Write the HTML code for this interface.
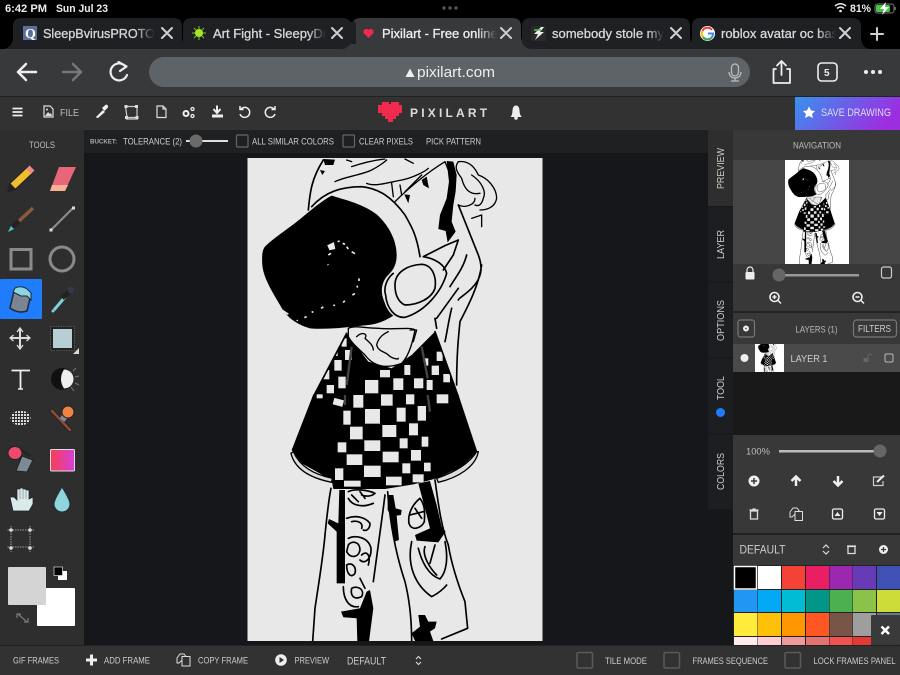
<!DOCTYPE html>
<html><head><meta charset="utf-8"><title>Pixilart</title>
<style>
html,body{margin:0;padding:0;background:#000;width:900px;height:675px;overflow:hidden}
svg{display:block;position:absolute;left:0;top:0}
text{font-family:"Liberation Sans",sans-serif;fill:#ccc;font-size:9.5px}
.tab{font-size:13px;fill:#d8d8d8;stroke:#d8d8d8;stroke-width:.3px}
.x{stroke:#d0d0d0;stroke-width:2;fill:none;stroke-linecap:round}
.l{fill:none;stroke:#000;stroke-width:5;stroke-linecap:round;stroke-linejoin:round}
.t{fill:none;stroke:#000;stroke-width:5;stroke-linecap:round;stroke-linejoin:round}
</style></head><body>
<svg width="900" height="675" viewBox="0 0 900 675" xmlns="http://www.w3.org/2000/svg">
<defs>
<linearGradient id="save" x1="0" x2="1" y1="0" y2=".3"><stop offset="0" stop-color="#3793ee"/><stop offset="1" stop-color="#9b2fe0"/></linearGradient>
<linearGradient id="grad" x1="0" x2="1"><stop offset="0" stop-color="#f53f55"/><stop offset="1" stop-color="#d93fd8"/></linearGradient>
<linearGradient id="fd" x1="0" x2="1"><stop offset="0" stop-color="#1f2023" stop-opacity="0"/><stop offset="1" stop-color="#1f2023"/></linearGradient>
<linearGradient id="fa" x1="0" x2="1"><stop offset="0" stop-color="#38393b" stop-opacity="0"/><stop offset="1" stop-color="#38393b"/></linearGradient>
<pattern id="dots" width="3" height="3" patternUnits="userSpaceOnUse"><rect width="2" height="2" fill="#ddd"/></pattern>
<clipPath id="cv"><rect x="247.5" y="158" width="295" height="483"/></clipPath>
<g id="art">
 <g transform="translate(245,155) scale(.3333)">
  <!-- shirt -->
  <path d="M305 535 L205 725 L640 725 L570 530 L500 600 L440 640 L370 620 Z" fill="#000"/>
  <g fill="#e8e8e8">
   <rect x="290" y="550" width="15" height="25"/><rect x="258" y="575" width="20" height="28"/><rect x="300" y="585" width="20" height="30"/><rect x="268" y="615" width="22" height="32"/><rect x="235" y="645" width="18" height="28"/><rect x="280" y="665" width="22" height="35"/><rect x="245" y="690" width="22" height="25"/><rect x="360" y="675" width="40" height="40"/><rect x="405" y="645" width="30" height="22"/><rect x="478" y="630" width="18" height="30"/><rect x="445" y="670" width="30" height="35"/><rect x="507" y="670" width="28" height="30"/><rect x="575" y="590" width="18" height="28"/><rect x="560" y="632" width="22" height="28"/><rect x="595" y="657" width="20" height="25"/><rect x="545" y="675" width="18" height="30"/><rect x="540" y="610" width="10" height="22"/><rect x="325" y="720" width="30" height="10"/>
  </g>
  <path d="M320 575 L305 690 M530 575 L548 670" stroke="#444" stroke-width="7" fill="none"/>
  <path d="M305 535 L205 725 M570 530 L640 725" class="l"/>
  <!-- collar -->
  <path d="M310 520 C330 510 360 520 400 520 C450 525 500 515 510 525 C505 550 495 600 470 625 C430 640 390 640 360 600 C340 580 320 565 310 545 Z" fill="#e8e8e8" stroke="#000" stroke-width="4"/>
  <path class="t" style="stroke-width:4" d="M335 545 C350 530 370 535 360 550 C370 560 385 570 385 585 M395 570 C400 545 420 535 430 530 M395 570 C400 590 420 590 430 600 C440 610 460 615 460 610 M495 525 L515 525 L505 560"/>
  <!-- hood / hair -->
  <path class="l" d="M190 165 C195 110 200 70 235 15 M200 155 C240 110 290 95 350 95 C400 100 440 125 480 180 C500 215 515 240 525 305"/>
  <path class="t" style="stroke-width:4" d="M270 80 C300 65 350 60 380 45 C400 35 420 20 425 15 M320 35 C350 25 390 15 420 12 M365 85 C390 95 420 85 470 75 C500 70 540 50 550 40 M440 85 L445 125 M465 90 L470 120 M480 110 C500 90 520 70 530 60 M450 140 C490 100 550 50 600 20 L620 70 M305 15 L320 20 M480 12 L505 25"/>
  <path d="M235 12 L270 14 L265 30 L240 30 Z M225 45 L240 48 L232 60 Z M478 118 L495 120 L490 145 Z M530 75 L545 65 L552 100 L535 90 Z" fill="#000"/>
  <path d="M605 18 L625 20 L635 60 L632 110 L625 150 L620 200 L632 230 L608 262 L602 228 L580 222 L585 180 L605 130 L612 80 Z" fill="#000"/>
  <path class="t" style="stroke-width:4" d="M640 20 C680 15 695 50 700 60 C730 70 755 100 755 130 C750 160 720 165 705 165 M650 70 C660 110 680 120 705 115 M680 60 C710 80 725 110 715 130 C710 150 700 155 690 150 M640 150 C660 160 690 150 690 130 M680 190 L710 180 L710 215 M640 20 C625 40 640 55 650 70"/>
  <path class="l" d="M640 150 C660 200 680 250 700 300 C715 340 710 370 680 400 C660 420 640 430 640 435 M665 300 C655 340 630 370 615 395 M620 460 C610 500 605 540 600 560 M710 330 C700 400 660 470 645 500 C640 550 635 600 635 690"/>
  <!-- face -->
  <path d="M260 122 C300 135 350 145 395 178 C430 210 455 255 455 300 C455 335 440 350 425 365 C410 385 405 410 418 440 C425 462 435 475 445 482 C425 495 400 507 370 510 C320 515 250 525 195 520 C160 510 125 490 105 450 C85 415 55 370 52 330 C50 300 52 285 60 275 C90 245 140 215 180 180 C205 160 235 135 260 122 Z" fill="#000"/>
  <path d="M250 272 L265 265 L268 280 L255 283 Z M278 260 L284 258 M293 265 L300 268 M305 275 L310 282 M320 290 L330 296 M250 300 L258 295 M248 328 L250 330 M342 370 L342 378 M337 392 L337 398 M330 416 L322 420 M300 438 L294 442 M265 450 L270 452 M235 456 L228 460 M205 470 L200 472 M185 485 L178 488 M156 495 L158 498 M112 466 L130 478" stroke="#e8e8e8" stroke-width="5" fill="#e8e8e8"/>
  <!-- ear -->
  <path class="l" d="M450 390 C450 350 490 330 530 328 C565 330 575 370 570 400 C560 430 520 450 480 450 C455 440 450 410 450 390 Z"/>
  <path class="l" d="M535 305 C570 310 600 330 605 355 C590 410 540 470 480 487 C450 490 425 460 422 420 C415 400 425 370 445 355 M535 305 L600 272 L640 255 L625 300 L595 345 M575 490 L640 400 M570 490 L575 520"/>
 </g>
 <g transform="translate(245,395) scale(.3333)">
  <!-- skirt -->
  <path d="M205 -2 L140 165 L170 205 L260 255 L265 282 L420 282 L505 268 L575 250 L650 215 L697 170 L640 -2 Z" fill="#000"/>
  <path d="M138 175 C150 225 200 250 260 262 L262 250 C205 238 165 215 145 170 Z M580 262 C640 248 692 215 700 170 L695 170 C670 210 620 235 575 250 Z" fill="#ddd" stroke="#000" stroke-width="4"/>
  <g fill="#e8e8e8">
   <rect x="215" y="-2" width="18" height="12"/><rect x="265" y="12" width="30" height="20" transform="rotate(15 280 22)"/><rect x="325" y="0" width="30" height="38"/><rect x="408" y="-2" width="35" height="34"/><rect x="483" y="-2" width="25" height="30"/><rect x="575" y="-2" width="35" height="27"/>
   <rect x="295" y="47" width="22" height="42"/><rect x="360" y="42" width="45" height="44"/><rect x="455" y="38" width="27" height="42"/><rect x="518" y="33" width="25" height="44"/>
   <rect x="315" y="95" width="38" height="38"/><rect x="412" y="90" width="42" height="36"/><rect x="492" y="85" width="27" height="36"/>
   <rect x="278" y="142" width="26" height="30"/><rect x="358" y="136" width="48" height="32"/><rect x="464" y="130" width="24" height="30"/><rect x="530" y="125" width="20" height="30"/>
   <rect x="305" y="178" width="47" height="32"/><rect x="413" y="170" width="48" height="32"/><rect x="498" y="165" width="30" height="32"/>
   <rect x="270" y="220" width="25" height="35"/><rect x="357" y="212" width="50" height="34"/><rect x="472" y="205" width="24" height="30"/><rect x="537" y="203" width="20" height="26"/>
   <rect x="297" y="257" width="50" height="18"/><rect x="423" y="245" width="47" height="26"/><rect x="503" y="238" width="33" height="24"/>
  </g>
  <path d="M300 0 L300 30 M548 0 L555 50" stroke="#444" stroke-width="7"/>
  <!-- pants -->
  <path class="l" d="M258 280 C250 320 245 370 240 420 C235 480 225 540 210 640 L203 740 M420 300 C410 380 400 450 385 560 M428 290 C435 380 450 470 480 560 C495 620 500 680 500 740 M570 255 C580 330 590 400 610 450 C620 510 640 570 660 620 L668 700 L590 732"/>
  <path d="M283 285 L300 285 L300 565 L275 565 L275 410 L248 385 L252 372 L280 385 Z" fill="#000"/>
  <path d="M375 585 L385 640 L372 740 L337 740 L335 670 L295 667 L288 650 L345 640 L365 590 Z" fill="#000"/>
  <path d="M520 265 L555 258 L575 330 L590 395 L602 410 L580 442 L515 437 L510 420 L555 400 L540 340 Z" fill="#000"/>
  <path d="M428 300 L445 300 L452 340 L470 345 L468 360 L455 362 L462 435 L448 440 L437 360 L428 345 Z" fill="#000"/>
  <path d="M520 660 L540 660 L550 680 L575 680 L570 700 L555 710 L565 738 L510 738 L500 715 L525 695 Z" fill="#000"/>
  <path class="t" d="M310 290 C330 280 370 285 390 295 C380 305 360 305 350 300 M310 310 C320 330 350 340 385 325 M320 300 L340 320 M345 290 L360 310 M305 370 C330 360 360 365 375 385 C375 400 365 410 355 405 M320 380 C340 375 355 385 350 400 M310 430 C330 420 370 425 378 460 C380 490 360 510 345 495 M310 450 C320 435 345 440 345 465 C340 490 315 490 305 470 Z M305 510 C320 500 335 515 330 535 C320 550 305 540 305 510 Z M320 580 C340 570 360 585 350 605 C330 615 315 605 320 580 Z M295 575 C295 610 310 640 340 635 M345 550 L360 580 M350 480 C365 465 378 480 370 510"/>
  <path class="t" d="M525 310 C500 330 488 360 492 385 C500 410 530 400 538 380 C540 350 540 330 525 310 Z M510 340 L530 370 M495 360 L535 350 M500 440 C485 510 510 570 560 605 C590 590 605 570 605 570 M520 460 C530 500 550 540 585 552 C605 530 610 490 600 440 M540 455 C530 480 555 520 575 540 M570 450 L555 505"/>
 </g>
</g>
<clipPath id="tc"><rect x="785" y="160" width="64" height="104"/></clipPath>
<clipPath id="lc"><rect x="755" y="344" width="29" height="28"/></clipPath>
</defs>

<!-- status bar -->
<rect width="900" height="49" fill="#000"/>
<text x="5" y="12" style="font-size:11px;font-weight:bold;fill:#eee" textLength="42" lengthAdjust="spacingAndGlyphs">6:42 PM</text>
<text x="56" y="12" style="font-size:11px;font-weight:bold;fill:#eee" textLength="52" lengthAdjust="spacingAndGlyphs">Sun Jul 23</text>
<circle cx="444" cy="8" r="1.7" fill="#555"/><circle cx="450" cy="8" r="1.7" fill="#555"/><circle cx="456" cy="8" r="1.7" fill="#555"/>
<path d="M835 6 Q840.5 1.5 846 6 M837 8.5 Q840.5 5.500 844 8.5" fill="none" stroke="#eee" stroke-width="1.5"/><circle cx="840.5" cy="11" r="1.3" fill="#eee"/>
<text x="850" y="12" style="font-size:11px;font-weight:bold;fill:#eee" textLength="21" lengthAdjust="spacingAndGlyphs">81%</text>
<rect x="875" y="4" width="19" height="9" rx="2.5" fill="none" stroke="#777"/><rect x="876" y="5" width="14" height="7" rx="1.5" fill="#4bc24b"/><rect x="894.6" y="7" width="1.2" height="3" fill="#777"/>
<path d="M886 2 L880 9 L884 9 L882 15 L889 7 L885 7 Z" fill="#fff"/>

<!-- tabs -->
<path d="M4 49 Q13 47 13 36 V26 Q13 18 22 18 H173 Q182 18 182 26 V49 Z" fill="#1f2023"/>
<path d="M175 49 Q183 47 183 36 V26 Q183 18 192 18 H342 Q351 18 351 26 V49 Z" fill="#1f2023"/>
<path d="M513 49 Q522 47 522 36 V26 Q522 18 531 18 H681 Q690 18 690 26 V36 Q690 47 698 49 Z" fill="#1f2023"/>
<path d="M684 49 Q692 47 692 36 V26 Q692 18 701 18 H852 Q861 18 861 26 V36 Q861 47 869 49 Z" fill="#1f2023"/>
<path d="M343 49 Q352 47 352 36 V26 Q352 18 361 18 H512 Q521 18 521 26 V36 Q521 47 530 49 Z" fill="#38393b"/>
<rect x="23" y="26" width="14" height="14" fill="#5b7099"/><text x="25" y="38" style="font-family:'Liberation Serif',serif;font-size:14px;font-weight:bold;fill:#fff">Q</text>
<g stroke="#7fc31c" stroke-width="1"><path d="M199 26 V40 M192 33 H206 M194 28 L204 38 M204 28 L194 38"/></g><circle cx="199" cy="33" r="4" fill="#a5e626"/>
<path d="M368.500 38 L363.500 33 V30.500 L365.500 29 H367.500 L368.500 30 L369.500 29 H371.500 L373.500 30.500 V33 Z" fill="#f0294f"/>
<rect x="531" y="26" width="15" height="15" fill="#2a2a2a"/><path d="M541 27 L534 34 H538 L535 40 L544 32 H540 L544 27 Z" fill="#eee"/><path d="M534 30 H541" stroke="#55c455" stroke-width="1.5"/>
<circle cx="707.500" cy="33.500" r="7.500" fill="#fff"/><path d="M712 30 A5.500 5.500 0 0 0 702.500 31" stroke="#ea4335" stroke-width="2" fill="none"/><path d="M702.500 31 A5.500 5.500 0 0 0 703 37" stroke="#fbbc05" stroke-width="2" fill="none"/><path d="M703 37 A5.500 5.500 0 0 0 712 37" stroke="#34a853" stroke-width="2" fill="none"/><path d="M708 33.500 H713 A5.500 5.500 0 0 1 712 37" stroke="#4285f4" stroke-width="2" fill="none"/>
<text class="tab" x="43" y="38" textLength="112" lengthAdjust="spacingAndGlyphs">SleepBvirusPROTO</text><rect x="135" y="22" width="20" height="22" fill="url(#fd)"/><rect x="155" y="22" width="5" height="22" fill="#1f2023"/>
<text class="tab" x="213" y="38">Art Fight - SleepyDr</text><rect x="308" y="22" width="18" height="22" fill="url(#fd)"/><rect x="326" y="22" width="30" height="22" fill="#1f2023"/>
<text class="tab" x="382" y="38" style="fill:#eee;stroke:#eee">Pixilart - Free online</text><rect x="478" y="22" width="19" height="22" fill="url(#fa)"/><rect x="497" y="22" width="20" height="22" fill="#38393b"/>
<text class="tab" x="552" y="38">somebody stole my</text><rect x="647" y="22" width="17" height="22" fill="url(#fd)"/><rect x="664" y="22" width="20" height="22" fill="#1f2023"/>
<text class="tab" x="721" y="38">roblox avatar oc bas</text><rect x="817" y="22" width="19" height="22" fill="url(#fd)"/><rect x="836" y="22" width="20" height="22" fill="#1f2023"/>
<path class="x" d="M162 28 L172 38 M172 28 L162 38 M332 28 L342 38 M342 28 L332 38 M501 28 L511 38 M511 28 L501 38 M671 28 L681 38 M681 28 L671 38 M840 28 L850 38 M850 28 L840 38 M871 34 H883 M877 28 V40" />

<!-- nav bar -->
<rect y="49" width="900" height="47" fill="#38393b"/>
<rect x="149" y="57" width="601" height="30" rx="15" fill="#5e6367"/>
<path d="M36 72 H18 M26 64 L18 72 L26 80" stroke="#eee" stroke-width="2.500" fill="none" stroke-linecap="round" stroke-linejoin="round"/>
<path d="M63 72 H81 M73 64 L81 72 L73 80" stroke="#777" stroke-width="2.500" fill="none" stroke-linecap="round" stroke-linejoin="round"/>
<path d="M126 67 A8.500 8.500 0 1 0 127 75 M118.500 62 L126.500 66.500 L120 71" stroke="#eee" stroke-width="2.200" fill="none" stroke-linecap="round" stroke-linejoin="round"/>
<path d="M410 68.500 L414.500 77 H405.500 Z" fill="#eee"/>
<text x="417" y="77" style="font-size:15px;fill:#eee" textLength="78" lengthAdjust="spacingAndGlyphs">pixilart.com</text>
<rect x="731.500" y="64" width="7" height="12" rx="3.500" fill="none" stroke="#bbb" stroke-width="1.300"/><path d="M729 72 A6 6 0 0 0 741 72 M735 78 V81 M731 81 H739" fill="none" stroke="#bbb" stroke-width="1.300"/>
<path d="M776 69 H773.500 V83 H790 V69 H787 M781.500 75 V61.500 M777 65.500 L781.500 61 L786 65.500" fill="none" stroke="#eee" stroke-width="1.800" stroke-linecap="round" stroke-linejoin="round"/>
<rect x="818" y="63" width="19" height="18" rx="3.500" fill="none" stroke="#eee" stroke-width="1.600"/><text x="824" y="76" style="font-size:10px;font-weight:bold;fill:#eee">5</text>
<circle cx="866" cy="72" r="2" fill="#eee"/><circle cx="873" cy="72" r="2" fill="#eee"/><circle cx="880" cy="72" r="2" fill="#eee"/>

<!-- app bar -->
<rect y="96" width="900" height="1.500" fill="#222"/>
<rect y="97" width="900" height="33" fill="#323232"/>
<rect x="795" y="97" width="105" height="33" fill="url(#save)"/>
<path d="M12.500 108.500 H22.500 M12.500 112 H22.500 M12.500 115.500 H22.500" stroke="#eee" stroke-width="1.700"/>
<path d="M44 106 H50 L53 109 V117 H44 Z" fill="none" stroke="#ddd" stroke-width="1.200"/><path d="M45 116 L48 112 L50 114 L51 113 L52 116 Z" fill="#ddd"/><circle cx="47" cy="109.500" r="1" fill="#ddd"/>
<text x="60" y="116" style="font-size:10.500px;fill:#bbb" textLength="19" lengthAdjust="spacingAndGlyphs">FILE</text>
<path d="M97 118 L96 117 L103 110 L105 112 L98 118 Z" fill="#eee"/><path d="M102 108 L106 104.500 Q108.500 105 108 107.500 L104.500 111 Z" fill="#eee"/>
<path d="M125.500 106.500 H137 V117.500 H127 Z M126 119 H138" fill="none" stroke="#ccc" stroke-width="1.200"/><rect x="124.500" y="105" width="3" height="3" fill="#ddd"/><rect x="135" y="105" width="3" height="3" fill="#ddd"/><rect x="125" y="116" width="3" height="3" fill="#ddd"/><rect x="135.500" y="116" width="3" height="3" fill="#ddd"/>
<path d="M157 106 H163 L166 109 V117.500 H157 Z M163 106 V109 H166" fill="none" stroke="#ddd" stroke-width="1.200"/>
<circle cx="186" cy="113.500" r="2.500" fill="none" stroke="#eee" stroke-width="2"/><circle cx="192.500" cy="109" r="1.500" fill="none" stroke="#eee" stroke-width="1.300"/><circle cx="192.500" cy="116" r="1.500" fill="none" stroke="#eee" stroke-width="1.300"/>
<path d="M217 105.500 V112 M213.500 109 L217 113 L220.500 109" fill="none" stroke="#eee" stroke-width="2"/><rect x="212" y="114.500" width="11" height="3" fill="#eee"/>
<path d="M241 109 A5 5 0 1 1 240 114 M240 106 V109.500 H243.500" fill="none" stroke="#eee" stroke-width="1.500"/>
<path d="M274 109 A5 5 0 1 0 275 114 M275 106 V109.500 H271.500" fill="none" stroke="#eee" stroke-width="1.500"/>
<path d="M382 102 H389 V104 H391 V102 H399 V105 H402 V113 H399 V116 H396 V119 H393 V122 H388 V119 H385 V116 H382 V113 H378 V105 H382 Z" fill="#f0294f"/>
<text x="410" y="117" style="font-size:12px;font-weight:bold;fill:#ddd;letter-spacing:3.200px">PIXILART</text>
<path d="M510.500 117 Q512.500 115 512.500 110 Q513 105.500 516 105.500 Q519 105.500 519.500 110 Q519.500 115 522 117 Z" fill="#eee"/><circle cx="516" cy="118" r="1.800" fill="#eee"/>
<path d="M809 106.500 L811 110.500 L815 111 L812 114 L813 118 L809 116 L805 118 L806 114 L803 111 L807 110.500 Z" fill="#fff"/>
<text x="821" y="116" style="font-size:11px;fill:#dcdcf8" textLength="70" lengthAdjust="spacingAndGlyphs">SAVE DRAWING</text>

<!-- work area -->
<rect y="130" width="900" height="515" fill="#15171a"/>
<rect x="84" y="130" width="624" height="23" fill="#1f2022"/>
<text x="90" y="143.500" style="font-size:6.500px;font-weight:bold;fill:#aaa" textLength="27" lengthAdjust="spacingAndGlyphs">BUCKET:</text>
<text x="123" y="144.500" textLength="59" lengthAdjust="spacingAndGlyphs">TOLERANCE (2)</text>
<rect x="186" y="140" width="42" height="2" fill="#ddd"/><circle cx="196" cy="141" r="6.500" fill="#6a6a6a"/>
<rect x="236.500" y="135" width="11.500" height="12" rx="1" fill="none" stroke="#666" stroke-width="1.200"/>
<text x="252" y="144.500" textLength="82" lengthAdjust="spacingAndGlyphs">ALL SIMILAR COLORS</text>
<rect x="343" y="135" width="11.500" height="12" rx="1" fill="none" stroke="#666" stroke-width="1.200"/>
<text x="359" y="144.500" textLength="54" lengthAdjust="spacingAndGlyphs">CLEAR PIXELS</text>
<text x="426" y="144.500" textLength="55" lengthAdjust="spacingAndGlyphs">PICK PATTERN</text>

<!-- canvas -->
<rect x="247.500" y="158" width="295" height="483" fill="#e8e8e8"/>
<use href="#art" clip-path="url(#cv)"/>

<!-- left tools -->
<rect y="130" width="84" height="515" fill="#2e2e2e"/>
<text x="29" y="148" style="font-size:9px;fill:#bbb" textLength="26" lengthAdjust="spacingAndGlyphs">TOOLS</text>
<rect y="279" width="42" height="40" rx="1" fill="#1f7dfb"/>
<!-- pencil -->
<path d="M12 187 L31 169" stroke="#222" stroke-width="9"/><path d="M13 186 L30 170" stroke="#f2bd2c" stroke-width="7"/><path d="M28.500 171.500 L32 168" stroke="#f08a8a" stroke-width="7"/><path d="M7 193 L9 183 L16 190 Z" fill="#222"/>
<!-- eraser -->
<path d="M50 191 L59 167 L76 167 L65 191 Z" fill="#e8667a"/><path d="M50 191 L52 185 L68 185 L65 191 Z" fill="#f6b196"/>
<!-- brush -->
<path d="M33 208 L18 222" stroke="#8a5a3a" stroke-width="3.500"/><path d="M19 221 L12 227" stroke="#222" stroke-width="5"/><path d="M8 232 L11 226 L14 229 Z" fill="#4fc3d0"/>
<!-- line -->
<path d="M51 230 L73 208" stroke="#8c8c8c" stroke-width="2"/><rect x="49.500" y="228.500" width="3" height="3" fill="#ddd"/><rect x="72" y="206.500" width="3" height="3" fill="#ddd"/>
<!-- shapes -->
<rect x="11" y="249.500" width="20" height="19.500" fill="none" stroke="#8a8a8a" stroke-width="3"/>
<circle cx="62" cy="259" r="12" fill="none" stroke="#8a8a8a" stroke-width="3"/>
<!-- bucket -->
<path d="M14 291 L31 294 L27 311 Q18 314 10 308 Z" fill="#7a8591" stroke="#1a2a44" stroke-width="1.500"/><path d="M15 288 Q24 284 31 293 L31 300 L27 296 L21 296 L13 292 Z" fill="#8fd3dc" stroke="#1a2a44" stroke-width="1"/>
<!-- dropper -->
<path d="M65 297 L54 310" stroke="#7fd0da" stroke-width="3"/><path d="M62 298 L70 291" stroke="#222" stroke-width="5"/><circle cx="71" cy="290" r="3.500" fill="#33384a"/><circle cx="53" cy="311" r="1.500" fill="#7fd0da"/>
<!-- move -->
<path d="M20 329 V348 M11 338 H30" stroke="#ddd" stroke-width="2"/><path d="M17 332 L20 328 L23 332 M17 345 L20 349 L23 345 M13.500 335 L10 338 L13.500 341 M26.500 335 L30 338 L26.500 341" fill="none" stroke="#ddd" stroke-width="1.300"/>
<!-- square -->
<rect x="50.500" y="326.500" width="24" height="24" fill="#222" stroke="#555" stroke-dasharray="1.500 1"/><rect x="53" y="329" width="19" height="19" fill="#b6ced4"/><path d="M73 354 L79 348 V354 Z" fill="#ddd"/>
<!-- T -->
<path d="M11.500 370.500 H30 M20.500 370.500 V389" stroke="#eee" stroke-width="1.800"/><path d="M18 389 H23" stroke="#eee" stroke-width="1.500"/>
<!-- moon -->
<circle cx="62" cy="379" r="11" fill="#111"/><path d="M64 369.500 A9.500 9.500 0 0 1 64 388.500 Q58 379 64 369.500 Z" fill="#eee"/><path d="M73 371 L76 368 M75 377 L79 376 M75 383 L79 385 M71 387 L74 391" stroke="#777"/>
<!-- dither -->
<ellipse cx="20.500" cy="418" rx="10" ry="7.500" fill="url(#dots)"/>
<!-- stamp -->
<path d="M52 411 L70 430" stroke="#2b2020" stroke-width="4.500" stroke-linecap="round"/><path d="M52 411 L70 430" stroke="#8a4d3c" stroke-width="2.500" stroke-linecap="round"/><path d="M62 420 L67 414" stroke="#7f8a96" stroke-width="6"/><circle cx="68" cy="412" r="6" fill="#ee8345" stroke="#222"/>
<!-- gum -->
<ellipse cx="15" cy="453" rx="7" ry="6.500" fill="#ef4a6c" stroke="#222"/><path d="M21 450 L30 456" stroke="#222" stroke-width="2"/><path d="M22 456 L33 460 L27 472 L16 471 Z" fill="#7c8a93" stroke="#222"/>
<!-- gradient -->
<rect x="50.500" y="449.500" width="24" height="21.500" rx="1" fill="url(#grad)" stroke="#ddd"/>
<!-- hand -->
<path d="M13 511 L10 497 L14 497 L17 500 V489 H20 V488 H23 V489 H26 V490 H29 V499 L33 497 L33 504 L29 511 Z" fill="#d8eaea" stroke="#222" stroke-width=".7"/><path d="M20 490 V499 M23 489 V499 M26 490 V499" stroke="#889" stroke-width=".7"/>
<!-- drop -->
<path d="M62 487 Q70 500 70 504 A8 8 0 0 1 54 504 Q54 500 62 487 Z" fill="#8fd5da" stroke="#1f2f38"/>
<!-- transform -->
<path d="M7.500 530 H34 M7.500 547 H34 M11 526 V552 M30 526 V552" stroke="#999" stroke-dasharray="1.500 1"/><circle cx="11" cy="530" r="1.800" fill="#ddd"/><circle cx="30" cy="530" r="1.800" fill="#ddd"/><circle cx="11" cy="548" r="1.800" fill="#ddd"/><circle cx="30" cy="548" r="1.800" fill="#ddd"/>
<!-- colors -->
<rect x="37" y="588" width="38" height="38" rx="1" fill="#fff"/>
<rect x="8" y="567" width="38" height="38" rx="1" fill="#d4d4d4"/>
<rect x="58" y="571" width="9" height="9" fill="#fff"/><rect x="54" y="567" width="8.500" height="8.500" fill="#000" stroke="#ddd" stroke-width=".7"/>
<path d="M18 614 L27 622 M17 618 V614 H21 M28 618 V622 H24" fill="none" stroke="#777" stroke-width="1.300"/>

<!-- right tabs -->
<rect x="708" y="130" width="25" height="379" fill="#1c1e22"/>
<rect x="708" y="130" width="25" height="76" fill="#2e2e2e"/>
<path d="M708 206.500 H733 M708 282 H733 M708 358 H733 M708 434 H733" stroke="#15171a"/>
<text transform="translate(724,189) rotate(-90)" style="font-size:10.500px;fill:#ccc" textLength="41" lengthAdjust="spacingAndGlyphs">PREVIEW</text>
<text transform="translate(724,259) rotate(-90)" style="font-size:10.500px;fill:#ccc" textLength="29" lengthAdjust="spacingAndGlyphs">LAYER</text>
<text transform="translate(724,341) rotate(-90)" style="font-size:10.500px;fill:#ccc" textLength="41" lengthAdjust="spacingAndGlyphs">OPTIONS</text>
<text transform="translate(724,400) rotate(-90)" style="font-size:10.500px;fill:#ccc" textLength="24" lengthAdjust="spacingAndGlyphs">TOOL</text>
<text transform="translate(724,490) rotate(-90)" style="font-size:10.500px;fill:#ccc" textLength="37" lengthAdjust="spacingAndGlyphs">COLORS</text>
<circle cx="720.500" cy="412.500" r="4.500" fill="#1f7dfb"/>

<!-- right panel top -->
<rect x="733" y="130" width="167" height="242" fill="#383838"/>
<rect x="733" y="160" width="167" height="104" fill="#454545"/>
<text x="793" y="148.500" style="font-size:9px;fill:#bbb" textLength="48" lengthAdjust="spacingAndGlyphs">NAVIGATION</text>
<rect x="785" y="160" width="64" height="104" fill="#fff"/>
<g clip-path="url(#tc)"><use href="#art" transform="translate(785,160) scale(.217) translate(-247.5,-158)"/></g>
<rect x="745.500" y="272" width="9" height="7.500" rx="1" fill="#eee"/><path d="M747 272 V270 A3 3 0 0 1 753 270 V272" fill="none" stroke="#eee" stroke-width="1.200"/>
<rect x="779" y="274" width="80" height="2.500" fill="#999"/><circle cx="779" cy="275" r="6.500" fill="#666"/>
<rect x="877.500" y="268" width="10" height="11" rx="2" fill="none" stroke="#ccc" stroke-width="1.200" transform="translate(4,-1)"/>
<circle cx="774.500" cy="297" r="4.500" fill="none" stroke="#eee" stroke-width="1.600"/><path d="M772.500 297 H776.500 M774.500 295 V299 M778 300.500 L781 303.500" stroke="#eee" stroke-width="1.500"/>
<circle cx="857.500" cy="297" r="4.500" fill="none" stroke="#eee" stroke-width="1.600"/><path d="M855.500 297 H859.500 M861 300.500 L864 303.500" stroke="#eee" stroke-width="1.500"/>
<rect x="733" y="311" width="167" height="2" fill="#222"/>
<rect x="738" y="320" width="16.500" height="17" rx="2.500" fill="none" stroke="#777" stroke-width="1.200"/><circle cx="746" cy="328.500" r="2.500" fill="#eee" stroke="#eee"/><circle cx="746" cy="328.500" r=".8" fill="#383838"/>
<text x="795.500" y="332.500" style="font-size:9.500px;fill:#bbb" textLength="42" lengthAdjust="spacingAndGlyphs">LAYERS (1)</text>
<rect x="853.500" y="320" width="43" height="17" rx="3" fill="none" stroke="#777" stroke-width="1.200"/><text x="858" y="332" style="font-size:10px;fill:#ccc" textLength="33" lengthAdjust="spacingAndGlyphs">FILTERS</text>
<rect x="733" y="344" width="167" height="28" fill="#4a4a4a"/>
<circle cx="744.500" cy="358" r="4" fill="#eee"/>
<rect x="755" y="344" width="29" height="28" fill="#fff"/>
<g clip-path="url(#lc)"><use href="#art" transform="translate(763,347) scale(.083) translate(-320,-260)"/></g>
<text x="790.500" y="362" style="font-size:10.500px;fill:#ccc" textLength="37" lengthAdjust="spacingAndGlyphs">LAYER 1</text>
<rect x="863.500" y="358" width="5" height="4" fill="#666"/><path d="M868 358 V356 A2 2 0 0 1 872 356" fill="none" stroke="#666"/>
<rect x="885" y="354" width="8" height="8" rx="1.500" fill="none" stroke="#bbb"/>

<!-- lower right -->
<rect x="733" y="372" width="167" height="63" fill="#191919"/>
<rect x="733" y="435" width="167" height="98" fill="#383838"/>
<rect x="733" y="533" width="167" height="2" fill="#222"/>
<rect x="733" y="535" width="167" height="30" fill="#383838"/>
<text x="746" y="454.500" style="font-size:9.500px;fill:#bbb" textLength="24" lengthAdjust="spacingAndGlyphs">100%</text>
<rect x="779" y="450" width="101" height="2.500" fill="#bbb"/><circle cx="880" cy="451" r="6.500" fill="#666"/>
<circle cx="754" cy="481" r="5.500" fill="#eee"/><path d="M751 481 H757 M754 478 V484" stroke="#383838" stroke-width="1.500"/>
<path d="M796 486 V477 M791.500 481 L796 476.500 L800.500 481" fill="none" stroke="#eee" stroke-width="2.500"/>
<path d="M838 476 V485 M833.500 481 L838 485.500 L842.500 481" fill="none" stroke="#eee" stroke-width="2.500"/>
<path d="M882 477 H873.500 V485.500 H883 V481" fill="none" stroke="#ccc" stroke-width="1.200"/><path d="M877 482 L884 475.500" stroke="#eee" stroke-width="2"/>
<path d="M750.500 511 H757.500 V519 H750.500 Z M749.500 510 H758.500 M752.500 509 H755.500" fill="none" stroke="#ddd" stroke-width="1.300"/>
<path d="M793 508 H797 L799 510.500 L792 517 H790 V512 Z" fill="none" stroke="#ddd" stroke-width="1"/><rect x="795" y="511.500" width="7.500" height="9" fill="#383838" stroke="#ddd"/>
<rect x="832.500" y="509" width="10" height="10" rx="1.500" fill="none" stroke="#eee" stroke-width="1.300"/><path d="M834.500 516 H840.500 L837.500 512 Z" fill="#eee"/>
<rect x="874.500" y="509" width="10" height="10" rx="1.500" fill="none" stroke="#eee" stroke-width="1.300"/><path d="M876.500 512 H882.500 L879.500 516 Z" fill="#eee"/>
<text x="739.500" y="553.500" style="font-size:12px;fill:#ccc" textLength="46" lengthAdjust="spacingAndGlyphs">DEFAULT</text>
<path d="M823 548 L826 545 L829 548 M823 551 L826 554 L829 551" fill="none" stroke="#ddd" stroke-width="1.200"/>
<path d="M848 546.500 H855 V553.500 H848 Z M847 546 H856" fill="none" stroke="#ddd" stroke-width="1.300"/>
<circle cx="883.500" cy="549.500" r="4.500" fill="#eee"/><path d="M881 549.500 H886 M883.500 547 V552" stroke="#383838" stroke-width="1.200"/>

<!-- palette -->
<rect x="733" y="565" width="167" height="80" fill="#222"/>
<g>
<rect x="734.500" y="566.500" width="22" height="22.500" fill="#000" stroke="#fff" stroke-width="1.500"/><rect x="758" y="566" width="23" height="23" fill="#fff"/><rect x="782" y="566" width="23" height="23" fill="#f44336"/><rect x="806" y="566" width="23" height="23" fill="#e91e63"/><rect x="829.500" y="566" width="23" height="23" fill="#9c27b0"/><rect x="853" y="566" width="23" height="23" fill="#673ab7"/><rect x="877" y="566" width="23" height="23" fill="#3f51b5"/>
<rect x="734" y="590" width="23.500" height="22" fill="#2196f3"/><rect x="758" y="590" width="23" height="22" fill="#03a9f4"/><rect x="782" y="590" width="23" height="22" fill="#00bcd4"/><rect x="806" y="590" width="23" height="22" fill="#009688"/><rect x="829.500" y="590" width="23" height="22" fill="#4caf50"/><rect x="853" y="590" width="23" height="22" fill="#8bc34a"/><rect x="877" y="590" width="23" height="22" fill="#cddc39"/>
<rect x="734" y="613" width="23.500" height="23" fill="#ffeb3b"/><rect x="758" y="613" width="23" height="23" fill="#ffc107"/><rect x="782" y="613" width="23" height="23" fill="#ff9800"/><rect x="806" y="613" width="23" height="23" fill="#ff5722"/><rect x="829.500" y="613" width="23" height="23" fill="#795548"/><rect x="853" y="613" width="23" height="23" fill="#9e9e9e"/><rect x="877" y="613" width="23" height="23" fill="#607d8b"/>
<rect x="734" y="637" width="23.500" height="8" fill="#ffebee"/><rect x="758" y="637" width="23" height="8" fill="#ffcdd2"/><rect x="782" y="637" width="23" height="8" fill="#ef9a9a"/><rect x="806" y="637" width="23" height="8" fill="#e57373"/><rect x="829.500" y="637" width="23" height="8" fill="#ef5350"/><rect x="853" y="637" width="18" height="8" fill="#e53935"/>
</g>
<rect x="871" y="615" width="29" height="30" rx="1" fill="#3a3a3a"/>
<path d="M881.500 626.500 L889 634 M889 626.500 L881.500 634" stroke="#fff" stroke-width="2.500"/>

<!-- bottom bar -->
<rect y="645" width="900" height="30" fill="#323232"/>
<rect y="645" width="900" height="1" fill="#222"/>
<text x="13" y="663.500" textLength="46" lengthAdjust="spacingAndGlyphs">GIF FRAMES</text>
<path d="M86 660 H97 M91.500 654.500 V665.500" stroke="#eee" stroke-width="3"/>
<text x="104" y="663.500" textLength="46" lengthAdjust="spacingAndGlyphs">ADD FRAME</text>
<path d="M180 654 H184 L186 656.500 L179 663 H177 V658 Z" fill="none" stroke="#ddd"/><rect x="182" y="656.500" width="8" height="9.500" fill="#323232" stroke="#ddd"/>
<text x="198" y="663.500" textLength="50" lengthAdjust="spacingAndGlyphs">COPY FRAME</text>
<circle cx="281" cy="660" r="5.800" fill="#eee"/><path d="M279.500 657 L284 660 L279.500 663 Z" fill="#323232"/>
<text x="294.500" y="663.500" textLength="34.500" lengthAdjust="spacingAndGlyphs">PREVIEW</text>
<text x="347" y="664.500" style="font-size:11px;fill:#ccc" textLength="39" lengthAdjust="spacingAndGlyphs">DEFAULT</text>
<path d="M416 659 L418.500 656.500 L421 659 M416 662 L418.500 664.500 L421 662" fill="none" stroke="#ddd" stroke-width="1.100"/>
<rect x="577" y="652.500" width="15.500" height="15.500" rx="1.500" fill="none" stroke="#5a5a5a" stroke-width="1.500"/>
<text x="605" y="664" textLength="42" lengthAdjust="spacingAndGlyphs">TILE MODE</text>
<rect x="664" y="652.500" width="15.500" height="15.500" rx="1.500" fill="none" stroke="#5a5a5a" stroke-width="1.500"/>
<text x="692.500" y="664" textLength="75.500" lengthAdjust="spacingAndGlyphs">FRAMES SEQUENCE</text>
<rect x="785" y="652.500" width="15.500" height="15.500" rx="1.500" fill="none" stroke="#5a5a5a" stroke-width="1.500"/>
<text x="813.500" y="664" textLength="82" lengthAdjust="spacingAndGlyphs">LOCK FRAMES PANEL</text>
</svg>
</body></html>
